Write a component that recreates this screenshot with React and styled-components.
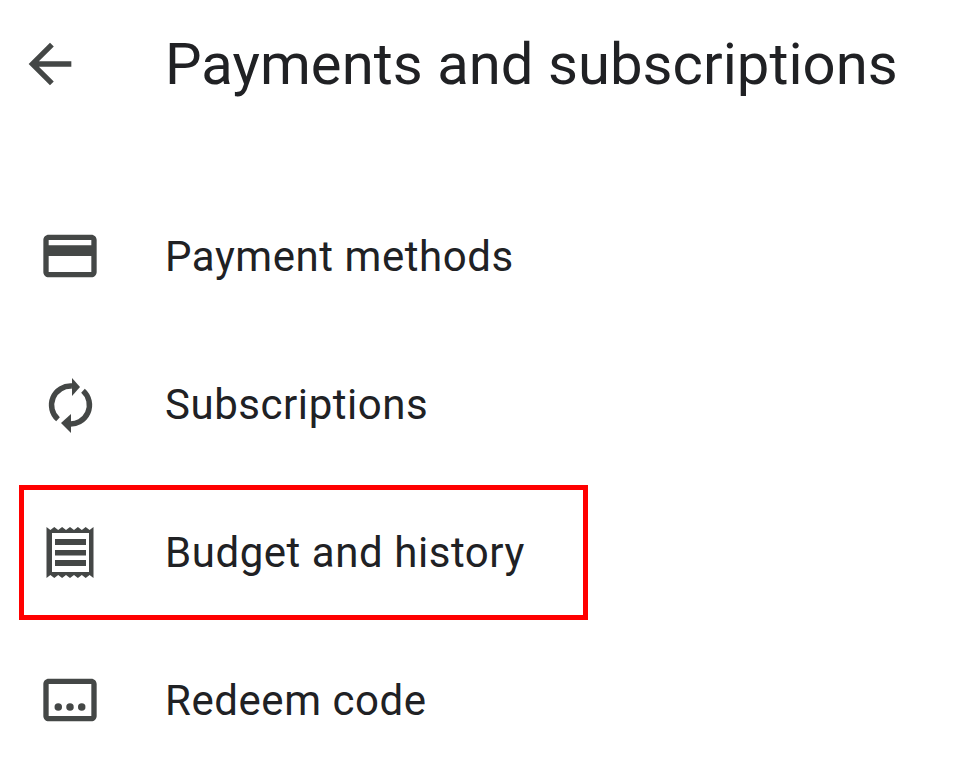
import React from 'react';
import styled, { createGlobalStyle } from 'styled-components';

const GlobalStyle = createGlobalStyle`
  html, body {
    margin: 0;
    padding: 0;
    background: #fff;
  }
  body {
    font-family: Roboto, "Liberation Sans", sans-serif;
    color: #202124;
  }
`;

const Page = styled.div`
  width: 966px;
  height: 773px;
  overflow: hidden;
  background: #fff;
`;

const Header = styled.header`
  display: flex;
  align-items: center;
  gap: 83px;
  height: 128px;
  padding-left: 18px;
  margin-bottom: 54px;
`;

const Title = styled.h1`
  margin: 0;
  font-size: 58px;
  font-weight: 400;
  letter-spacing: 0.04px;
  white-space: nowrap;
`;

const Menu = styled.nav`
  display: flex;
  flex-direction: column;
`;

const Row = styled.div`
  position: relative;
  display: flex;
  align-items: center;
  gap: 63px;
  height: 148px;
  padding-left: 38px;
  font-size: 42px;
  letter-spacing: 0.55px;

  ${(p) =>
    p.$highlighted &&
    `
    &::after {
      content: '';
      position: absolute;
      left: 19px;
      top: 7px;
      width: 569px;
      height: 135px;
      box-sizing: border-box;
      border: 5px solid #ff0000;
    }
  `}
`;

const Icon = styled.svg`
  flex: none;
  width: 64px;
  height: 64px;
  fill: #444746;
`;

const BackIcon = () => (
  <Icon viewBox="0 0 24 24">
    <path d="M20 11H7.83l5.59-5.59L12 4l-8 8 8 8 1.41-1.41L7.83 13H20v-2z" />
  </Icon>
);

const CardIcon = () => (
  <Icon viewBox="0 0 24 24">
    <path d="M20 4H4c-1.11 0-1.99.89-1.99 2L2 18c0 1.11.89 2 2 2h16c1.11 0 2-.89 2-2V6c0-1.11-.89-2-2-2zm0 14H4v-6h16v6zm0-10H4V6h16v2z" />
  </Icon>
);

const RenewIcon = () => (
  <Icon viewBox="0 0 64 64">
    <path d="M34 14.1 A19 19 0 0 0 20 47.3" fill="none" stroke="#444746" strokeWidth="5.5" />
    <path d="M45 18.7 A19 19 0 0 1 30 51.8" fill="none" stroke="#444746" strokeWidth="5.5" />
    <path d="M34 6 L42 15 L34 24 Z" />
    <path d="M33 42 L23 51 L33 61 Z" />
  </Icon>
);

const ReceiptIcon = () => (
  <Icon viewBox="0 0 64 64">
    <path
      fillRule="evenodd"
      d="M8.5 7 L12.4 10 L16.3 7 L20.2 10 L24.1 7 L28 10 L32 7 L36 10 L39.9 7 L43.8 10 L47.7 7 L51.6 10 L55.5 7 V58 L51.6 55 L47.7 58 L43.8 55 L39.9 58 L36 55 L32 58 L28 55 L24.1 58 L20.2 55 L16.3 58 L12.4 55 L8.5 58 Z M14 13 V52 H51 V13 Z"
    />
    <rect x="17" y="19" width="31" height="6" />
    <rect x="17" y="30" width="31" height="5.5" />
    <rect x="17" y="40" width="31" height="6" />
  </Icon>
);

const RedeemIcon = () => (
  <Icon viewBox="0 0 24 24">
    <path d="M20 4H4c-1.1 0-2 .9-2 2v12c0 1.1.9 2 2 2h16c1.1 0 2-.9 2-2V6c0-1.1-.9-2-2-2zm0 14H4V6h16v12z" />
    <circle cx="7.6" cy="14.6" r="1.4" />
    <circle cx="12" cy="14.6" r="1.4" />
    <circle cx="16.4" cy="14.6" r="1.4" />
  </Icon>
);

const items = [
  { label: 'Payment methods', icon: <CardIcon /> },
  { label: 'Subscriptions', icon: <RenewIcon /> },
  { label: 'Budget and history', icon: <ReceiptIcon />, highlighted: true },
  { label: 'Redeem code', icon: <RedeemIcon /> },
];

export default function App() {
  return (
    <Page>
      <GlobalStyle />
      <Header>
        <BackIcon />
        <Title>Payments and subscriptions</Title>
      </Header>
      <Menu>
        {items.map((item) => (
          <Row key={item.label} $highlighted={item.highlighted}>
            {item.icon}
            <span>{item.label}</span>
          </Row>
        ))}
      </Menu>
    </Page>
  );
}
